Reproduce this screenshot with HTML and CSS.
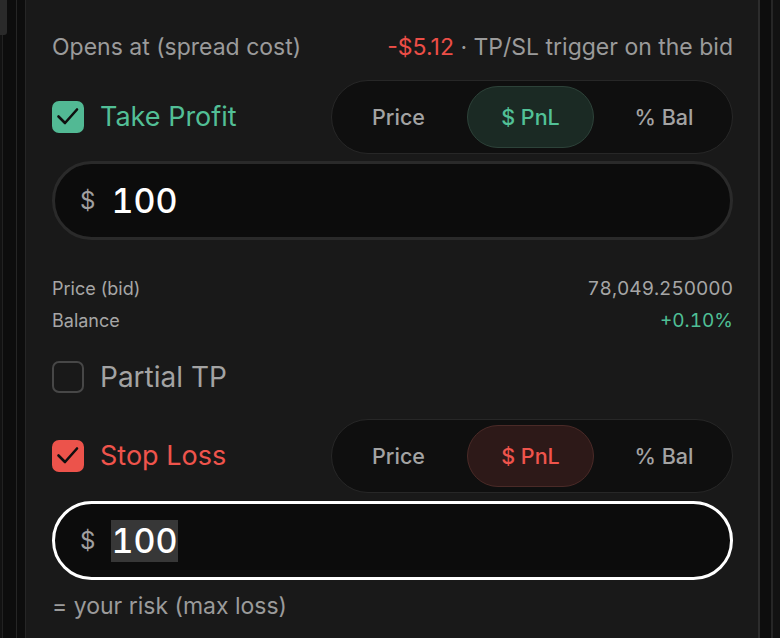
FILE: index.html
```html
<!DOCTYPE html>
<html>
<head>
<meta charset="utf-8">
<link rel="stylesheet" href="styles.css">
</head>
<body>
<div class="frame">
  <div class="rail-left">
    <div class="rail-a"><div class="thumb"></div></div>
    <div class="rail-b"></div>
  </div>
  <main class="panel">
    <div class="opens">
      <span>Opens at (spread cost)</span>
      <span><span class="neg">-$5.12</span> · TP/SL trigger on the bid</span>
    </div>

    <div class="toggle-row">
      <label class="check-label tp">
        <span class="box box-tp"><svg viewBox="0 0 32 32" width="32" height="32"><polyline points="6.5,15.5 13,22 25,8.5" fill="none" stroke="#0f0f0f" stroke-width="2.6" stroke-linecap="round" stroke-linejoin="round"/></svg></span>
        <span>Take Profit</span>
      </label>
      <div class="seg">
        <span class="opt">Price</span>
        <span class="opt on-tp">$ PnL</span>
        <span class="opt">% Bal</span>
      </div>
    </div>

    <div class="field">
      <span class="cur">$</span>
      <span class="val">100</span>
    </div>

    <div class="stats">
      <div class="stat"><span>Price (bid)</span><span class="num">78,049.250000</span></div>
      <div class="stat"><span>Balance</span><span class="num pos">+0.10%</span></div>
    </div>

    <label class="check-label partial">
      <span class="box box-off"></span>
      <span>Partial TP</span>
    </label>

    <div class="toggle-row sl-row">
      <label class="check-label sl">
        <span class="box box-sl"><svg viewBox="0 0 32 32" width="32" height="32"><polyline points="6.5,15.5 13,22 25,8.5" fill="none" stroke="#0f0f0f" stroke-width="2.6" stroke-linecap="round" stroke-linejoin="round"/></svg></span>
        <span>Stop Loss</span>
      </label>
      <div class="seg">
        <span class="opt">Price</span>
        <span class="opt on-sl">$ PnL</span>
        <span class="opt">% Bal</span>
      </div>
    </div>

    <div class="field focus">
      <span class="cur">$</span>
      <span class="val sel">100</span>
    </div>

    <p class="risk">= your risk (max loss)</p>
  </main>
  <div class="rail-right">
    <div class="rail-c"></div>
    <div class="rail-d"></div>
  </div>
</div>
</body>
</html>
```

FILE: styles.css
```css
* { box-sizing: border-box; }
html, body { margin: 0; height: 100%; }
body {
  background: #0e0e0e;
  font-family: Inter, "Noto Sans", sans-serif;
  overflow: hidden;
}
.frame {
  display: flex;
  height: 638px;
}
.rail-left {
  display: flex;
  width: 26px;
  flex: none;
}
.rail-a {
  position: relative;
  width: 17px;
  background: #0d0d0d;
  border-left: 2px solid #121212;
  border-right: 1px solid #262626;
}
.rail-a::before {
  content: "";
  position: absolute;
  left: 0;
  top: 0;
  bottom: 0;
  width: 1px;
  background: #222;
}
.thumb {
  position: absolute;
  left: -2px;
  top: 0;
  width: 7px;
  height: 35px;
  background: #2a2a2a;
  border-radius: 0 0 3px 0;
}
.rail-b {
  width: 9px;
  background: #0d0d0d;
  border-right: 1px solid #262626;
}
.rail-right {
  display: flex;
  width: 22px;
  flex: none;
}
.rail-c {
  width: 15px;
  background: #0d0d0d;
  border-left: 2px solid #2c2c2c;
  border-right: 2px solid #262626;
}
.rail-d {
  width: 7px;
  background: #121212;
}
.panel {
  flex: 1;
  background: #191919;
  padding: 34px 25px 0 26px;
  display: flex;
  flex-direction: column;
}
.opens {
  display: flex;
  justify-content: space-between;
  font-size: 23px;
  line-height: 26px;
  color: #9b9b9b;
}
.neg { color: #ec4e47; }
.pos { color: #4fbf95; }

.toggle-row {
  display: flex;
  align-items: center;
  justify-content: space-between;
  margin-top: 20px;
}
.check-label {
  display: flex;
  align-items: center;
  gap: 16px;
  font-size: 27px;
  line-height: 32px;
}
.tp { color: #52bf96; }
.sl { color: #ef544c; }
.partial { color: #a3a3a3; margin-top: 24px; font-size: 28px; }
.box {
  width: 32px;
  height: 32px;
  border-radius: 7px;
  display: flex;
  flex: none;
}
.box-tp { background: #52b994; }
.box-sl { background: #ec534b; }
.box-off { border: 2px solid #474747; }

.seg {
  width: 402px;
  height: 74px;
  border: 1px solid #272727;
  border-radius: 37px;
  background: #0f0f0f;
  padding: 5px;
  display: grid;
  grid-template-columns: 123px 127px 1fr;
  column-gap: 7px;
}
.opt {
  display: flex;
  align-items: center;
  justify-content: center;
  border-radius: 32px;
  font-size: 21.5px;
  font-weight: 500;
  color: #a3a3a3;
  border: 1px solid transparent;
}
.on-tp {
  background: #1b2a24;
  border-color: #2d4239;
  color: #52c197;
}
.on-sl {
  background: #2d1918;
  border-color: #4a2a27;
  color: #ef544c;
}

.field {
  margin-top: 7px;
  height: 79px;
  border: 3px solid #2a2a2a;
  border-radius: 40px;
  background: #0c0c0c;
  display: flex;
  align-items: center;
  padding-left: 25px;
  gap: 16px;
}
.field.focus {
  border-color: #ffffff;
}
.cur {
  font-size: 24px;
  color: #a0a0a0;
}
.val {
  font-size: 34px;
  font-weight: 500;
  color: #ffffff;
  line-height: 42px;
  font-variant-numeric: tabular-nums;
}
.val.sel { background: #373737; }

.stats {
  margin-top: 33px;
}
.stat {
  display: flex;
  justify-content: space-between;
  font-size: 18px;
  line-height: 32px;
  color: #a6a6a6;
}
.num {
  font-size: 19px;
  font-variant-numeric: tabular-nums;
}
.sl-row { margin-top: 26px; }
.sl-row + .field { margin-top: 8px; }
.risk {
  margin: 13px 0 0;
  font-size: 23px;
  line-height: 26px;
  color: #9b9b9b;
}
```
